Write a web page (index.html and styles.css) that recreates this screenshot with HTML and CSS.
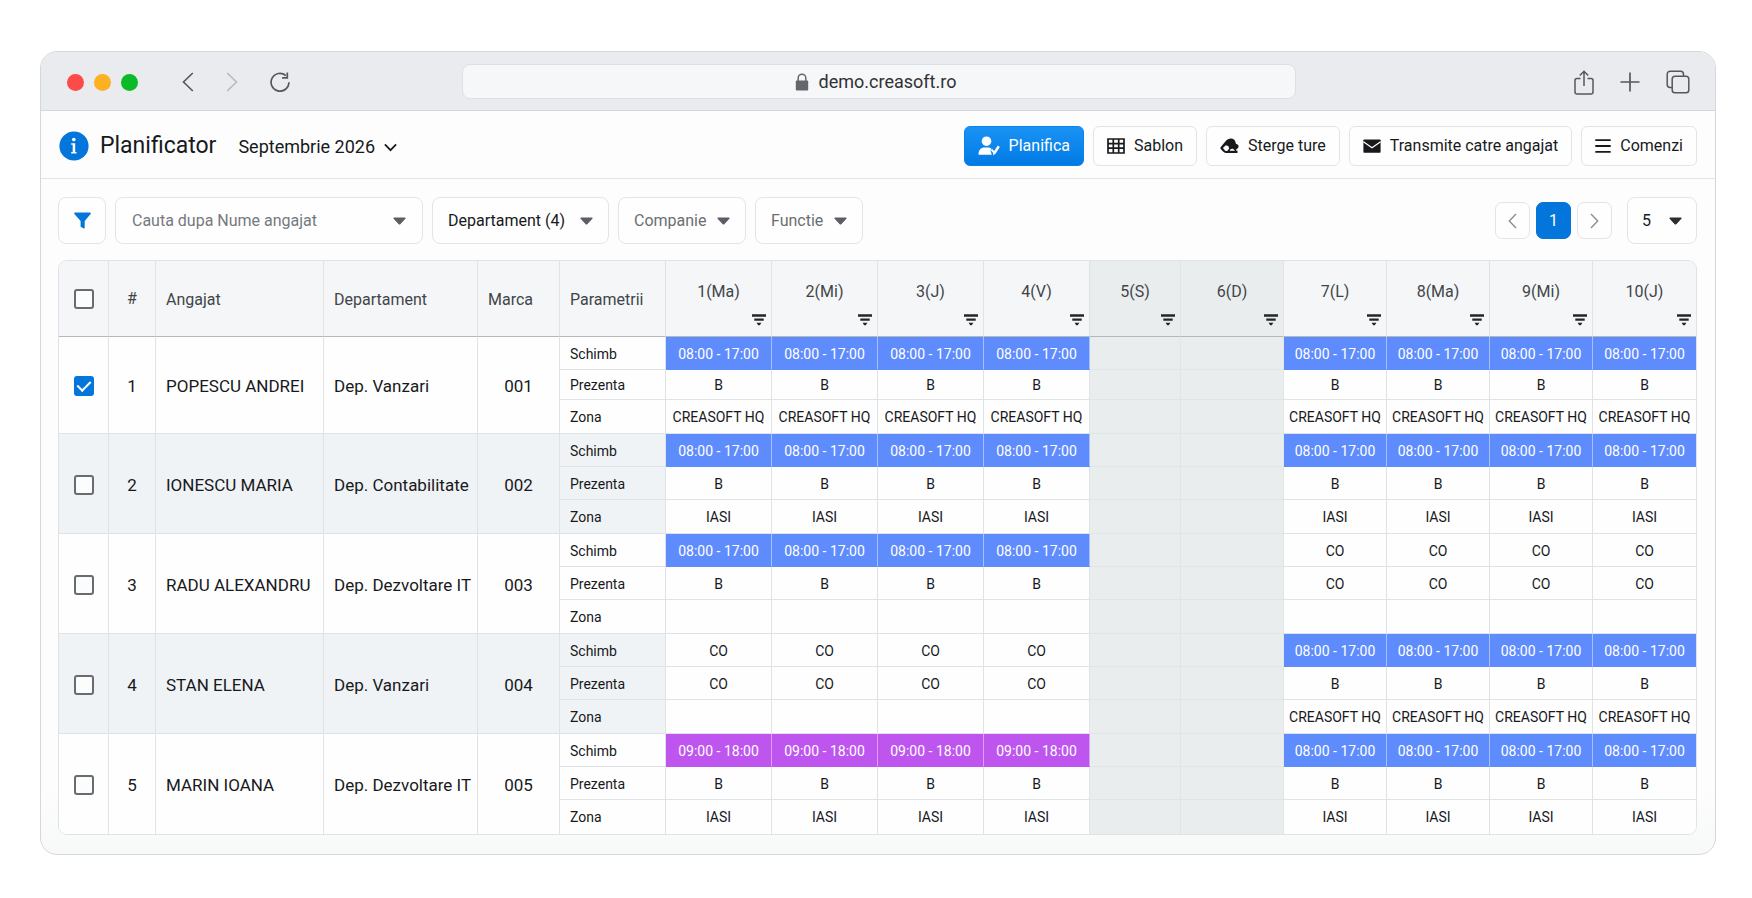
FILE: index.html
```html
<!DOCTYPE html>
<html lang="ro">
<head>
<meta charset="utf-8">
<meta name="viewport" content="width=device-width, initial-scale=1">
<title>Planificator</title>
<link rel="stylesheet" href="styles.css">
</head>
<body>
<svg class="sprite" aria-hidden="true">
  <symbol id="caret" viewBox="0 0 13 8"><path d="M1.2.5h10.6c.8 0 1.1.8.6 1.300L7.300 7.200a1.100 1.100 0 0 1-1.600 0L.6 1.800C.1 1.300.4.5 1.200.5z" fill="currentColor"/></symbol>
  <symbol id="sort" viewBox="0 0 14 12"><path d="M0 .3h14v2.400H0zM2.300 4.600h9.400v2.200H2.300zM4.600 8.700h4.800L7.800 11.200H6.200z" fill="currentColor"/></symbol>
</svg>

<div class="window">
  <div class="chrome">
    <div class="chrome-left">
      <div class="lights"><span class="light red"></span><span class="light amber"></span><span class="light green"></span></div>
      <div class="nav">
        <button type="button" class="icon-btn" aria-label="Inapoi"><svg width="12" height="20" viewBox="0 0 12 20"><path d="M10.800 1L1.500 10l9.300 9" fill="none" stroke="currentColor" stroke-width="1.600"/></svg></button>
        <button type="button" class="icon-btn dim" aria-label="Inainte"><svg width="12" height="20" viewBox="0 0 12 20"><path d="M1.200 1l9.300 9-9.300 9" fill="none" stroke="currentColor" stroke-width="1.600"/></svg></button>
        <button type="button" class="icon-btn" aria-label="Reincarca"><svg width="20" height="20" viewBox="0 0 20 20"><path d="M18.900 10.200A8.900 8.900 0 1 1 15.900 3.600" fill="none" stroke="currentColor" stroke-width="1.700"/><path d="M17.300.6v5.300h-5.200" fill="none" stroke="currentColor" stroke-width="1.700"/></svg></button>
      </div>
    </div>
    <div class="address">
      <svg width="14" height="18" viewBox="0 0 14 18"><path d="M3.200 8V5a3.800 3.800 0 0 1 7.600 0v3" fill="none" stroke="currentColor" stroke-width="1.500"/><rect x=".8" y="7.500" width="12.400" height="10" rx="1" fill="currentColor"/></svg>
      <span>demo.creasoft.ro</span>
    </div>
    <div class="chrome-right">
      <button type="button" class="icon-btn" aria-label="Partajeaza"><svg width="20" height="25" viewBox="0 0 20 25"><path d="M6.500 8.500H3a2 2 0 0 0-2 2V22a2 2 0 0 0 2 2h14a2 2 0 0 0 2-2V10.500a2 2 0 0 0-2-2h-3.500M10 16V1.500M5.800 5.500L10 1.300l4.200 4.200" fill="none" stroke="currentColor" stroke-width="1.500"/></svg></button>
      <button type="button" class="icon-btn" aria-label="Fila noua"><svg width="20" height="20" viewBox="0 0 20 20"><path d="M10 .5v19M.5 10h19" fill="none" stroke="currentColor" stroke-width="1.700"/></svg></button>
      <button type="button" class="icon-btn" aria-label="File"><svg width="24" height="24" viewBox="0 0 24 24"><rect x="6.200" y="6.200" width="16.600" height="16.600" rx="2.800" fill="none" stroke="currentColor" stroke-width="1.500"/><path d="M6 17.500H4.200a3 3 0 0 1-3-3V4.200a3 3 0 0 1 3-3h10.300a3 3 0 0 1 3 3V6" fill="none" stroke="currentColor" stroke-width="1.500"/></svg></button>
    </div>
  </div>

  <header class="header">
    <svg class="info" width="30" height="30" viewBox="0 0 30 30"><circle cx="15" cy="15" r="14.600" fill="#0475da"/><circle cx="14.800" cy="8.600" r="1.800" fill="#fff"/><path d="M12.200 12.200h4v8.800h1.300v1.600h-5.300V21h1.500v-7.200h-1.500z" fill="#fff"/></svg>
    <h1 class="title">Planificator</h1>
    <div class="month">
      <select aria-label="Luna"><option>Septembrie 2026</option></select>
      <svg width="13" height="9" viewBox="0 0 13 9"><path d="M.9 1.400l5.600 5.800 5.600-5.800" fill="none" stroke="currentColor" stroke-width="1.700"/></svg>
    </div>
    <div class="actions">
      <button type="button" class="btn primary"><svg width="22" height="20" viewBox="0 0 22 20"><circle cx="8.500" cy="5.200" r="4.800" fill="#fff"/><path d="M.5 18.800c0-5 2.600-7.300 6-7.300h3.600c1.600 0 2.800.6 3.600 1.600l-1.200 1.500 1.300 4.200z" fill="#fff"/><path d="M13.600 13.600l2.500 3" fill="none" stroke="#fff" stroke-width="2"/><path d="M15 19.600l.5-3.500 4.300-6.600 2 1.400-4 6.400z" fill="#fff"/></svg>Planifica</button>
      <button type="button" class="btn"><svg width="18" height="16" viewBox="0 0 18 16"><path d="M1 1h16v14H1zM1 5.600h16M1 10.200h16M6.300 1v14M11.700 1v14" fill="none" stroke="currentColor" stroke-width="1.700"/></svg>Sablon</button>
      <button type="button" class="btn"><svg width="19" height="16" viewBox="0 0 19 16"><path d="M5.600 3.300C7 1.500 9 .5 10.800.5c2.800 0 4.500 1.800 4.900 4.300l.2 1c1.700.5 2.700 1.500 2.700 2.500 0 1.400-1 2.300-2.300 2.900l-.4 1.300h1.600V15H5.900c-1.300 0-2.300-.8-3.300-1.900L.9 11.200c-.8-.9-.7-1.600.1-2.500z" fill="currentColor"/><path d="M2.900 9.900l2.900-2.700 2.500.7.900 2.500-2 2.600H5.500z" fill="#fff"/><path d="M9.700 12.700c.3-2 3-3 4.700-.6l.6.600z" fill="#fff"/></svg>Sterge ture</button>
      <button type="button" class="btn"><svg width="18" height="14" viewBox="0 0 18 14"><rect x=".4" y=".4" width="17.200" height="13.300" rx=".8" fill="currentColor"/><path d="M.4 2.800L9 8.700l8.600-5.900" fill="none" stroke="#fff" stroke-width="1.300"/></svg>Transmite catre angajat</button>
      <button type="button" class="btn"><svg width="16" height="14" viewBox="0 0 16 14"><path d="M.3 1.200h15.400M.3 7h15.400M.3 12.800h15.400" fill="none" stroke="currentColor" stroke-width="1.800"/></svg>Comenzi</button>
    </div>
  </header>

  <main class="content">
    <div class="toolbar">
      <button type="button" class="box filter" aria-label="Filtreaza"><svg width="17" height="17" viewBox="0 0 17 17"><path d="M1 .5h15c.8 0 1 .9.6 1.400L10.700 9v6.800c0 .5-.5.9-1 .6l-2.600-1.300a1 1 0 0 1-.5-.9V9L.4 1.900C0 1.400.2.5 1 .5z" fill="#0475da"/></svg></button>
      <div class="box field search">
        <input type="text" placeholder="Cauta dupa Nume angajat" aria-label="Cauta dupa Nume angajat">
        <svg class="caret"><use href="#caret"/></svg>
      </div>
      <div class="box field strong"><select aria-label="Departament"><option>Departament (4)</option></select><svg class="caret"><use href="#caret"/></svg></div>
      <div class="box field"><select aria-label="Companie"><option>Companie</option></select><svg class="caret"><use href="#caret"/></svg></div>
      <div class="box field"><select aria-label="Functie"><option>Functie</option></select><svg class="caret"><use href="#caret"/></svg></div>
      <nav class="pager" aria-label="Pagini">
        <button type="button" class="page" aria-label="Pagina anterioara"><svg width="9" height="16" viewBox="0 0 9 16"><path d="M8 1L1.300 8 8 15" fill="none" stroke="currentColor" stroke-width="1.400"/></svg></button>
        <button type="button" class="page current" aria-current="page">1</button>
        <button type="button" class="page" aria-label="Pagina urmatoare"><svg width="9" height="16" viewBox="0 0 9 16"><path d="M1 1l6.700 7L1 15" fill="none" stroke="currentColor" stroke-width="1.400"/></svg></button>
      </nav>
      <div class="box field strong size"><select aria-label="Randuri pe pagina"><option>5</option></select><svg class="caret"><use href="#caret"/></svg></div>
    </div>

    <div class="grid-frame">
      <table class="plan">
        <colgroup>
          <col class="c-check"><col class="c-num"><col class="c-name"><col class="c-dep"><col class="c-marca"><col class="c-day">
          <col class="c-day"><col class="c-day"><col class="c-day"><col class="c-day">
          <col class="c-sat"><col class="c-late"><col class="c-late"><col class="c-late"><col class="c-late"><col class="c-late">
        </colgroup>
        <thead>
          <tr>
            <th class="mid"><input type="checkbox" aria-label="Selecteaza tot"></th>
            <th class="mid">#</th><th>Angajat</th><th>Departament</th><th>Marca</th><th>Parametrii</th>
            <th class="day"><span>1(Ma)</span><svg><use href="#sort"/></svg></th>
            <th class="day"><span>2(Mi)</span><svg><use href="#sort"/></svg></th>
            <th class="day"><span>3(J)</span><svg><use href="#sort"/></svg></th>
            <th class="day"><span>4(V)</span><svg><use href="#sort"/></svg></th>
            <th class="day off"><span>5(S)</span><svg><use href="#sort"/></svg></th>
            <th class="day off"><span>6(D)</span><svg><use href="#sort"/></svg></th>
            <th class="day"><span>7(L)</span><svg><use href="#sort"/></svg></th>
            <th class="day"><span>8(Ma)</span><svg><use href="#sort"/></svg></th>
            <th class="day"><span>9(Mi)</span><svg><use href="#sort"/></svg></th>
            <th class="day"><span>10(J)</span><svg><use href="#sort"/></svg></th>
          </tr>
        </thead>
        <tbody>
          <tr>
            <td rowspan="3" class="key mid"><input type="checkbox" checked aria-label="Selecteaza POPESCU ANDREI"></td><td rowspan="3" class="key mid">1</td><td rowspan="3" class="key">POPESCU ANDREI</td><td rowspan="3" class="key">Dep. Vanzari</td><td rowspan="3" class="key mid">001</td>
            <td class="param">Schimb</td><td class="blue">08:00 - 17:00</td><td class="blue">08:00 - 17:00</td><td class="blue">08:00 - 17:00</td><td class="blue">08:00 - 17:00</td><td class="off"></td><td class="off"></td><td class="blue">08:00 - 17:00</td><td class="blue">08:00 - 17:00</td><td class="blue">08:00 - 17:00</td><td class="blue">08:00 - 17:00</td>
          </tr>
          <tr class="short"><td class="param">Prezenta</td><td>B</td><td>B</td><td>B</td><td>B</td><td class="off"></td><td class="off"></td><td>B</td><td>B</td><td>B</td><td>B</td></tr>
          <tr class="last"><td class="param">Zona</td><td>CREASOFT HQ</td><td>CREASOFT HQ</td><td>CREASOFT HQ</td><td>CREASOFT HQ</td><td class="off"></td><td class="off"></td><td>CREASOFT HQ</td><td>CREASOFT HQ</td><td>CREASOFT HQ</td><td>CREASOFT HQ</td></tr>
        </tbody>
        <tbody class="alt">
          <tr>
            <td rowspan="3" class="key mid"><input type="checkbox" aria-label="Selecteaza IONESCU MARIA"></td><td rowspan="3" class="key mid">2</td><td rowspan="3" class="key">IONESCU MARIA</td><td rowspan="3" class="key">Dep. Contabilitate</td><td rowspan="3" class="key mid">002</td>
            <td class="param">Schimb</td><td class="blue">08:00 - 17:00</td><td class="blue">08:00 - 17:00</td><td class="blue">08:00 - 17:00</td><td class="blue">08:00 - 17:00</td><td class="off"></td><td class="off"></td><td class="blue">08:00 - 17:00</td><td class="blue">08:00 - 17:00</td><td class="blue">08:00 - 17:00</td><td class="blue">08:00 - 17:00</td>
          </tr>
          <tr><td class="param">Prezenta</td><td>B</td><td>B</td><td>B</td><td>B</td><td class="off"></td><td class="off"></td><td>B</td><td>B</td><td>B</td><td>B</td></tr>
          <tr class="last"><td class="param">Zona</td><td>IASI</td><td>IASI</td><td>IASI</td><td>IASI</td><td class="off"></td><td class="off"></td><td>IASI</td><td>IASI</td><td>IASI</td><td>IASI</td></tr>
        </tbody>
        <tbody>
          <tr>
            <td rowspan="3" class="key mid"><input type="checkbox" aria-label="Selecteaza RADU ALEXANDRU"></td><td rowspan="3" class="key mid">3</td><td rowspan="3" class="key">RADU ALEXANDRU</td><td rowspan="3" class="key">Dep. Dezvoltare IT</td><td rowspan="3" class="key mid">003</td>
            <td class="param">Schimb</td><td class="blue">08:00 - 17:00</td><td class="blue">08:00 - 17:00</td><td class="blue">08:00 - 17:00</td><td class="blue">08:00 - 17:00</td><td class="off"></td><td class="off"></td><td>CO</td><td>CO</td><td>CO</td><td>CO</td>
          </tr>
          <tr><td class="param">Prezenta</td><td>B</td><td>B</td><td>B</td><td>B</td><td class="off"></td><td class="off"></td><td>CO</td><td>CO</td><td>CO</td><td>CO</td></tr>
          <tr class="last"><td class="param">Zona</td><td></td><td></td><td></td><td></td><td class="off"></td><td class="off"></td><td></td><td></td><td></td><td></td></tr>
        </tbody>
        <tbody class="alt">
          <tr>
            <td rowspan="3" class="key mid"><input type="checkbox" aria-label="Selecteaza STAN ELENA"></td><td rowspan="3" class="key mid">4</td><td rowspan="3" class="key">STAN ELENA</td><td rowspan="3" class="key">Dep. Vanzari</td><td rowspan="3" class="key mid">004</td>
            <td class="param">Schimb</td><td>CO</td><td>CO</td><td>CO</td><td>CO</td><td class="off"></td><td class="off"></td><td class="blue">08:00 - 17:00</td><td class="blue">08:00 - 17:00</td><td class="blue">08:00 - 17:00</td><td class="blue">08:00 - 17:00</td>
          </tr>
          <tr><td class="param">Prezenta</td><td>CO</td><td>CO</td><td>CO</td><td>CO</td><td class="off"></td><td class="off"></td><td>B</td><td>B</td><td>B</td><td>B</td></tr>
          <tr class="last"><td class="param">Zona</td><td></td><td></td><td></td><td></td><td class="off"></td><td class="off"></td><td>CREASOFT HQ</td><td>CREASOFT HQ</td><td>CREASOFT HQ</td><td>CREASOFT HQ</td></tr>
        </tbody>
        <tbody>
          <tr>
            <td rowspan="3" class="key mid"><input type="checkbox" aria-label="Selecteaza MARIN IOANA"></td><td rowspan="3" class="key mid">5</td><td rowspan="3" class="key">MARIN IOANA</td><td rowspan="3" class="key">Dep. Dezvoltare IT</td><td rowspan="3" class="key mid">005</td>
            <td class="param">Schimb</td><td class="purple">09:00 - 18:00</td><td class="purple">09:00 - 18:00</td><td class="purple">09:00 - 18:00</td><td class="purple">09:00 - 18:00</td><td class="off"></td><td class="off"></td><td class="blue">08:00 - 17:00</td><td class="blue">08:00 - 17:00</td><td class="blue">08:00 - 17:00</td><td class="blue">08:00 - 17:00</td>
          </tr>
          <tr><td class="param">Prezenta</td><td>B</td><td>B</td><td>B</td><td>B</td><td class="off"></td><td class="off"></td><td>B</td><td>B</td><td>B</td><td>B</td></tr>
          <tr class="last"><td class="param">Zona</td><td>IASI</td><td>IASI</td><td>IASI</td><td>IASI</td><td class="off"></td><td class="off"></td><td>IASI</td><td>IASI</td><td>IASI</td><td>IASI</td></tr>
        </tbody>
      </table>
    </div>
  </main>
</div>
</body>
</html>
```
FILE: styles.css
```css
* {
  box-sizing: border-box;
}

body {
  margin: 0;
  padding: 51px 36px 40px 40px;
  background: #fff;
  color: #17191c;
  font: 16px/20px Roboto, "Liberation Sans", sans-serif;
}

button,
input,
select {
  margin: 0;
  font: inherit;
  color: inherit;
}

svg {
  display: block;
  flex: none;
}

.sprite {
  position: absolute;
  width: 0;
  height: 0;
}

.window {
  overflow: hidden;
  border: 1px solid #d5d8db;
  border-radius: 17px;
  background: linear-gradient(#fdfdfe 92%, #f7f8f8);
}

/* Browser bar */
.chrome {
  display: grid;
  grid-template-columns: 1fr minmax(0, 834px) 1fr;
  align-items: center;
  height: 59px;
  padding: 0 25px 0 26px;
  border-bottom: 1px solid #d6d9dc;
  background: #e9ebee;
}

.chrome-left,
.chrome-right,
.nav,
.lights {
  display: flex;
  align-items: center;
}

.chrome-left,
.chrome-right {
  padding-top: 2px;
}

.lights {
  gap: 10px;
}

.light {
  width: 17px;
  height: 17px;
  border-radius: 50%;
}

.red { background: #fc4b48; }
.amber { background: #fdb022; }
.green { background: #0bba26; }

.nav {
  gap: 32px;
  margin-left: 44px;
}

.icon-btn {
  padding: 0;
  border: 0;
  background: none;
  color: #54585c;
}

.icon-btn.dim {
  color: #b7babd;
}

.chrome-right {
  justify-content: flex-end;
  gap: 26px;
}

.address {
  display: flex;
  align-items: center;
  justify-content: center;
  gap: 10px;
  height: 35px;
  padding: 2px 6px 0 0;
  border: 1px solid #dddfe3;
  border-radius: 8px;
  background: #f6f7f9;
  color: #303236;
  font-size: 18px;
}

.address svg {
  color: #63666a;
}

/* Page header */
.header {
  display: flex;
  align-items: center;
  padding: 15px 18px 12px;
  border-bottom: 1px solid #e3e5e7;
}

.title {
  margin: 0 0 0 11px;
  font-size: 23px;
  font-weight: 400;
  line-height: 28px;
}

.month {
  display: flex;
  align-items: center;
  gap: 9px;
  margin-left: 22px;
  padding-top: 2px;
  font-size: 18px;
}

select {
  padding: 0;
  border: 0;
  outline: 0;
  background: none;
  appearance: none;
}

.actions {
  display: flex;
  gap: 9px;
  margin-left: auto;
}

.btn {
  display: flex;
  align-items: center;
  gap: 9px;
  height: 40px;
  padding: 0 13px;
  border: 1px solid #e2e4e7;
  border-radius: 6px;
  background: #fefefe;
  white-space: nowrap;
}

.btn.primary {
  border-color: #0b84ea;
  background: linear-gradient(#1a93f5, #0179e4);
  color: #fff;
}

/* Filters and pager */
.content {
  padding: 18px 18px 19px 17px;
}

.toolbar {
  display: flex;
  align-items: center;
  gap: 9px;
  margin-bottom: 16px;
}

.box {
  display: flex;
  align-items: center;
  height: 47px;
  border: 1px solid #e2e4e6;
  border-radius: 8px;
  background: #fefefe;
}

.filter {
  justify-content: center;
  width: 48px;
  padding: 0;
}

.field {
  gap: 10px;
  padding: 0 15px;
  color: #6a6e73;
}

.field.strong {
  gap: 14px;
  color: #17191c;
}

.search {
  width: 308px;
  padding: 0 16px;
}

.search input {
  flex: 1;
  min-width: 0;
  padding: 0;
  border: 0;
  outline: 0;
  background: none;
}

.search input::placeholder {
  color: #75797e;
  opacity: 1;
}

.caret {
  width: 13px;
  height: 8px;
  color: #5b5f63;
}

.pager {
  display: flex;
  gap: 6px;
  margin: 0 6px 0 auto;
}

.page {
  display: flex;
  align-items: center;
  justify-content: center;
  width: 35px;
  height: 37px;
  padding: 0;
  border: 1px solid #e2e4e6;
  border-radius: 7px;
  background: #fefefe;
  color: #8b8f93;
}

.page.current {
  border-color: #0475da;
  background: #0475da;
  color: #fff;
}

.field.size {
  gap: 18px;
  padding: 0 14px;
}

.size .caret {
  color: #2b2d30;
}

/* Planning table */
.grid-frame {
  overflow: hidden;
  border: 1px solid #dfe3e5;
  border-radius: 9px;
}

.plan {
  width: 100%;
  table-layout: fixed;
  border-collapse: separate;
  border-spacing: 0;
}

.c-check { width: 50px; }
.c-num { width: 47px; }
.c-name { width: 168px; }
.c-dep { width: 154px; }
.c-marca { width: 82px; }
.c-day { width: 106px; }
.c-sat { width: 91px; }
.c-late { width: 103px; }

.plan th,
.plan td {
  padding: 0;
  border-right: 1px solid #dfe3e5;
  border-bottom: 1px solid #dfe3e5;
  white-space: nowrap;
}

.plan th:last-child,
.plan td:last-child {
  border-right: 0;
}

.plan tbody:last-child .last td,
.plan tbody:last-child .key {
  border-bottom: 0;
}

.plan th {
  height: 76px;
  padding: 2px 0 0 10px;
  border-bottom-color: #b4b8bb;
  background: #f4f6f8;
  color: #414549;
  font-weight: 400;
  text-align: left;
}

.plan .mid {
  padding: 0;
  text-align: center;
}

.plan .day {
  padding: 13px 5px 2px;
  text-align: center;
}

.day svg {
  width: 14px;
  height: 12px;
  margin: 12px 0 0 auto;
  color: #24262a;
}

.plan td {
  height: 33px;
  padding-top: 1px;
  background: #fefefe;
  font-size: 14px;
  line-height: 18px;
  text-align: center;
}

.plan .short td { height: 30px; }

.plan .last td {
  height: 34px;
  padding-top: 0;
}

.plan .key {
  padding: 2px 0 0 10px;
  font-size: 17px;
  text-align: left;
}

.plan .key.mid {
  padding-left: 0;
  text-align: center;
}

.plan .param {
  padding-left: 10px;
  text-align: left;
}

.alt .key,
.alt .param {
  background: #f0f3f5;
}

.plan .off {
  border-color: #e0e5e6;
  background: #e9edee;
}

.plan th.off {
  border-bottom-color: #b4b8bb;
}

.plan .blue {
  border-right-color: #a6bffd;
  border-bottom-color: #5f8cfd;
  background: #5f8cfd;
  color: #fff;
}

.plan .purple {
  border-right-color: #dba0f6;
  border-bottom-color: #bf55ef;
  background: #bf55ef;
  color: #fff;
}

input[type="checkbox"] {
  display: block;
  width: 20px;
  height: 20px;
  margin: 0 auto;
  border: 2px solid #686c70;
  border-radius: 3px;
  background: #fbfcfc;
  appearance: none;
}

input[type="checkbox"]:checked {
  border-color: #0475da;
  background: #0475da;
}

input[type="checkbox"]:checked::after {
  content: "";
  display: block;
  width: 6px;
  height: 11px;
  margin: 0 auto;
  border: solid #fff;
  border-width: 0 2px 2px 0;
  transform: rotate(45deg);
}
```
